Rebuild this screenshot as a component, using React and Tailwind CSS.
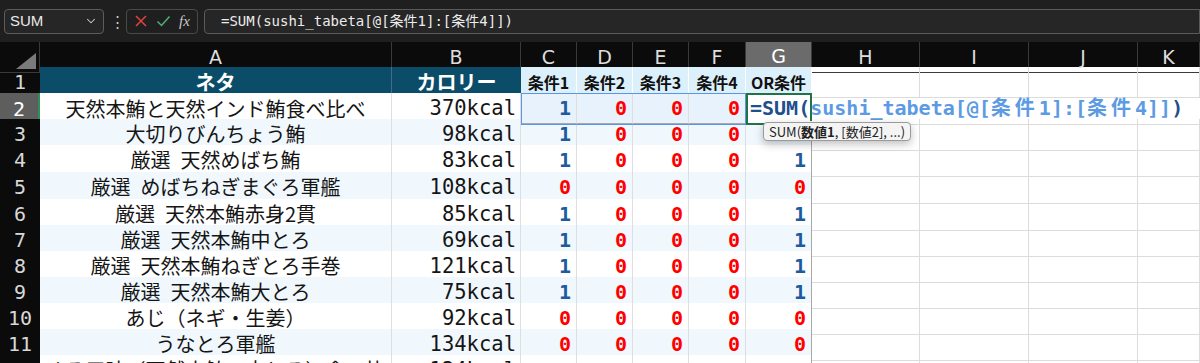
import React from 'react';
import { ChevronDown } from 'lucide-react';

const COLS = 'grid grid-cols-[40px_352px_129px_56px_56px_56px_57px_66px_108px_109px_109px_1fr]';
const MONO = "font-['DejaVu_Sans_Mono','Noto_Sans_CJK_JP',monospace]";
const JP = "font-['Noto_Sans_CJK_JP','Noto_Sans',sans-serif]";

const rows = [
  { n: 2, name: '天然本鮪と天然インド鮪食べ比べ', kcal: '370kcal', v: [1, 0, 0, 0] },
  { n: 3, name: '大切りびんちょう鮪', kcal: '98kcal', v: [1, 0, 0, 0, 1] },
  { n: 4, name: '厳選\u2002天然めばち鮪', kcal: '83kcal', v: [1, 0, 0, 0, 1], tall: true },
  { n: 5, name: '厳選\u2002めばちねぎまぐろ軍艦', kcal: '108kcal', v: [0, 0, 0, 0, 0], tall: true },
  { n: 6, name: '厳選\u2002天然本鮪赤身2貫', kcal: '85kcal', v: [1, 0, 0, 0, 1] },
  { n: 7, name: '厳選\u2002天然本鮪中とろ', kcal: '69kcal', v: [1, 0, 0, 0, 1] },
  { n: 8, name: '厳選\u2002天然本鮪ねぎとろ手巻', kcal: '121kcal', v: [1, 0, 0, 0, 1] },
  { n: 9, name: '厳選\u2002天然本鮪大とろ', kcal: '75kcal', v: [1, 0, 0, 0, 1] },
  { n: 10, name: 'あじ（ネギ・生姜）', kcal: '92kcal', v: [0, 0, 0, 0, 0] },
  { n: 11, name: 'うなとろ軍艦', kcal: '134kcal', v: [0, 0, 0, 0, 0] },
  { n: 12, name: 'まぐろ三昧（天然本鮪・中とろ）食べ比べ', kcal: '124kcal', v: [0, 1, 0, 0, 1] },
];

// 上部の数式バー
const FormulaBar = () => (
  <div className="h-[42px] bg-[#1f1f1f] flex items-center pl-[4px] gap-[6px]">
    <div className="w-[100px] h-[25px] border border-[#5c5c5c] rounded-[4px] bg-[#262626] flex items-center justify-between px-[5px]">
      <span className="text-[15px] text-[#eaeaea] font-['Liberation_Sans',sans-serif]">SUM</span>
      <ChevronDown className="w-[14px] h-[14px] text-[#cfcfcf]" strokeWidth={1.8} />
    </div>
    <span className="text-[#cfcfcf] text-[15px] leading-none w-[10px] text-center">⋮</span>
    <div className="w-[72px] h-[25px] border border-[#4a4a4a] rounded-[4px] flex items-center justify-around px-[3px]">
      <svg width="14" height="14" viewBox="0 0 14 14">
        <path d="M2 2 L12 12 M12 2 L2 12" stroke="#e0443e" strokeWidth="1.5" />
      </svg>
      <svg width="15" height="14" viewBox="0 0 15 14">
        <path d="M1.5 7.5 L5.5 11.5 L13.5 2.5" stroke="#4fae7c" strokeWidth="1.5" fill="none" />
      </svg>
      <span className="text-[#c8c8c8] text-[15px] italic font-['Liberation_Serif',serif]">fx</span>
    </div>
    <div className="flex-1 h-[25px] border border-[#5a5a5a] rounded-l-[4px] bg-[#262626] flex items-center pl-[16px]">
      <span className={`${MONO} text-[14px] text-[#ececec] whitespace-nowrap`}>=SUM(sushi_tabeta[@[条件1]:[条件4]])</span>
    </div>
  </div>
);

const colLetters = ['A', 'B', 'C', 'D', 'E', 'F', 'G', 'H', 'I', 'J', 'K'];

const ColumnHeader = () => (
  <div className={`${COLS} h-[25px] bg-[#0b0b0b]`}>
    <div className="relative border-r border-[#3a3a3a] border-b border-b-[#3a3a3a]">
      <svg className="absolute right-[3px] bottom-[3px]" width="20" height="16" viewBox="0 0 20 16">
        <polygon points="20,0 20,16 0,16" fill="#7a7a7a" />
      </svg>
    </div>
    {colLetters.map((c) => (
      <div
        key={c}
        className={`flex items-center justify-center text-[19px] font-['DejaVu_Sans',sans-serif] border-r border-[#3a3a3a] ${
          c === 'G' ? 'bg-[#6b6b6b] text-white border-b-2 border-b-[#2f8f5b]' : 'text-[#dedede] border-b border-b-[#3a3a3a]'
        }`}
      >
        {c}
      </div>
    ))}
  </div>
);

const RowHeader = ({ n, active }) => (
  <div
    className={`${MONO} flex items-center justify-center text-[20px] border-b border-[#555] ${
      active ? 'bg-[#5e5e5e] text-white border-r-2 border-r-[#2f8f5b]' : 'bg-[#0b0b0b] text-[#d8d8d8]'
    }`}
  >
    {n}
  </div>
);

const EmptyCells = ({ count, bordered = true }) =>
  Array.from({ length: count }).map((_, i) => (
    <div key={i} className={`border-b border-[#dcdcdc] ${bordered ? 'border-r' : ''}`} />
  ));

const Num = ({ v, shade, last }) => (
  <div
    className={`${MONO} ${shade} flex items-center justify-end pr-[5px] text-[20px] font-bold border-b border-b-[#a8a8a8] ${
      last ? 'border-r border-r-[#a8a8a8]' : 'border-r border-r-[#dedede]'
    } ${v === 1 ? 'text-[#1d5a9e]' : 'text-[#ff0000]'}`}
  >
    {v}
  </div>
);

const HeaderRow = () => (
  <div className={`${COLS} h-[26px]`}>
    <RowHeader n={1} />
    <div className={`${JP} bg-[#0b4d68] text-white font-bold text-[20px] flex items-center justify-center border-r border-[#3d7088] border-b border-b-[#a8a8a8]`}>
      ネタ
    </div>
    <div className={`${JP} bg-[#0b4d68] text-white font-bold text-[20px] flex items-center justify-center border-b border-b-[#a8a8a8]`}>
      カロリー
    </div>
    {['条件1', '条件2', '条件3', '条件4', 'OR条件'].map((h) => (
      <div
        key={h}
        className={`${JP} bg-[#dcf0fb] text-[#111] font-bold text-[16px] flex items-center justify-center border-r border-white border-b border-b-[#a8a8a8]`}
      >
        {h}
      </div>
    ))}
    <EmptyCells count={4} />
  </div>
);

// 全角文字は半角2文字分の幅で表示
const Wide = ({ children }) => <span className="tracking-[4px]">{children}</span>;

const DataRow = ({ row }) => {
  const shade = row.n % 2 === 1 ? 'bg-[#f0f8fd]' : 'bg-white';
  const isActive = row.n === 2;
  return (
    <div className={`${COLS} ${row.tall ? 'h-[27px]' : 'h-[26px]'} bg-white`}>
      <RowHeader n={row.n} active={isActive} />
      <div className={`${JP} ${shade} text-[20px] text-[#151515] flex items-center justify-center whitespace-nowrap overflow-hidden border-r border-[#dedede] border-b border-b-[#a8a8a8]`}>
        {row.name}
      </div>
      <div className={`${MONO} ${shade} text-[20.5px] text-[#151515] flex items-center justify-end pr-[4px] border-r border-[#dedede] border-b border-b-[#a8a8a8]`}>
        {row.kcal}
      </div>
      {isActive ? (
        <>
          <div className="col-span-4 relative bg-[#e8f2fc] border-b border-b-[#a8a8a8] grid grid-cols-[56px_56px_56px_57px]">
            {row.v.map((v, i) => (
              <Num key={i} v={v} shade="bg-transparent" />
            ))}
            <div className="absolute inset-0 -bottom-[1px] border border-[#5b95e5] pointer-events-none" />
          </div>
          <div className="relative z-10 flex items-center pl-[2px] pb-[3px] border-2 border-[#1f7345] bg-white">
            <span className={`${MONO} text-[20px] leading-none font-bold whitespace-nowrap`}>
              <span className="text-[#1f4f8c]">=SUM(</span>
              <span className="text-[#5c9be3]">
                sushi_tabeta[@[<Wide>条件</Wide>1]:[<Wide>条件</Wide>4]]
              </span>
              <span className="text-[#1f4f8c]">)</span>
            </span>
            <div className="absolute -right-[4px] -bottom-[4px] w-[6px] h-[6px] bg-[#1f7345] border border-white" />
          </div>
          <EmptyCells count={4} bordered={false} />
        </>
      ) : (
        <>
          {row.v.map((v, i) => (
            <Num key={i} v={v} shade={shade} last={i === 4} />
          ))}
          <EmptyCells count={4} />
        </>
      )}
    </div>
  );
};

// 関数の引数ヒント
const ArgTooltip = () => (
  <div className="absolute left-[763px] top-[122px] h-[19px] px-[5px] flex items-center bg-[#f4f4f4] border border-[#9a9a9a] rounded-[4px] shadow-[0_3px_8px_rgba(0,0,0,0.25)] z-20">
    <span className={`${JP} text-[13px] text-[#222] whitespace-nowrap leading-none`}>
      SUM(<b>数値1</b>, [数値2], ...)
    </span>
  </div>
);

export default function App() {
  return (
    <div className="w-[1200px] h-[363px] overflow-hidden bg-white relative">
      <FormulaBar />
      <ColumnHeader />
      <HeaderRow />
      {rows.map((row) => (
        <DataRow key={row.n} row={row} />
      ))}
      <ArgTooltip />
    </div>
  );
}
